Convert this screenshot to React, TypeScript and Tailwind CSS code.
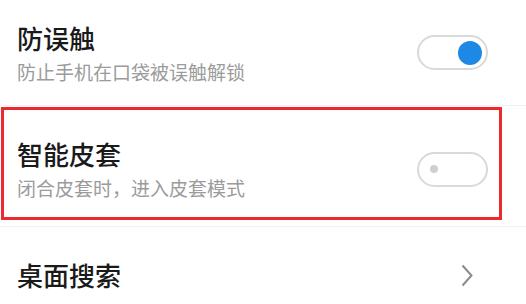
// Settings list: anti-mistouch, smart cover (highlighted), desktop search.

type ToggleProps = { on: boolean };

function Toggle({ on }: ToggleProps) {
  return (
    <div
      className={`flex h-[35px] w-[71px] shrink-0 items-center rounded-full border-2 border-[#d9d9d9] ${
        on ? "justify-end pr-[4px]" : "justify-start pl-[11px]"
      }`}
    >
      {on ? (
        <div className="h-[24px] w-[24px] rounded-full bg-[#1e88e5]" />
      ) : (
        <div className="h-[8px] w-[8px] rounded-full bg-[#cfcfcf]" />
      )}
    </div>
  );
}

function Texts({ title, desc }: { title: string; desc?: string }) {
  return (
    <div className="flex flex-col">
      <div className="text-[26px] font-medium leading-[34px] text-[#1a1a1a]">{title}</div>
      {desc && <div className="mt-[4px] text-[19px] leading-[26px] text-[#9b9b9b]">{desc}</div>}
    </div>
  );
}

export default function App() {
  return (
    <div
      className="flex h-[304px] w-[526px] flex-col overflow-hidden bg-white"
      style={{ fontFamily: '"Noto Sans CJK SC", "Noto Sans", sans-serif' }}
    >
      <div className="flex h-[106px] shrink-0 items-center justify-between border-b border-[#f2f2f2] pl-[17px] pr-[38px]">
        <Texts title="防误触" desc="防止手机在口袋被误触解锁" />
        <Toggle on />
      </div>

      <div className="ml-[1px] mt-[1px] flex h-[113px] w-[501px] shrink-0 items-center justify-between border-[3px] border-[#ea2a2f] pl-[13px] pr-[11px] pt-[11px]">
        <Texts title="智能皮套" desc="闭合皮套时，进入皮套模式" />
        <Toggle on={false} />
      </div>

      <div className="mt-[6px] h-px w-full shrink-0 bg-[#f2f2f2]" />

      <div className="flex h-[96px] shrink-0 items-center justify-between pl-[17px] pr-[53px]">
        <Texts title="桌面搜索" />
        <svg width="12" height="23" viewBox="0 0 12 23" fill="none" aria-hidden="true">
          <path d="M1.5 1.5 L10.5 11.5 L1.5 21.5" stroke="#8a8a8a" strokeWidth="2" />
        </svg>
      </div>
    </div>
  );
}
